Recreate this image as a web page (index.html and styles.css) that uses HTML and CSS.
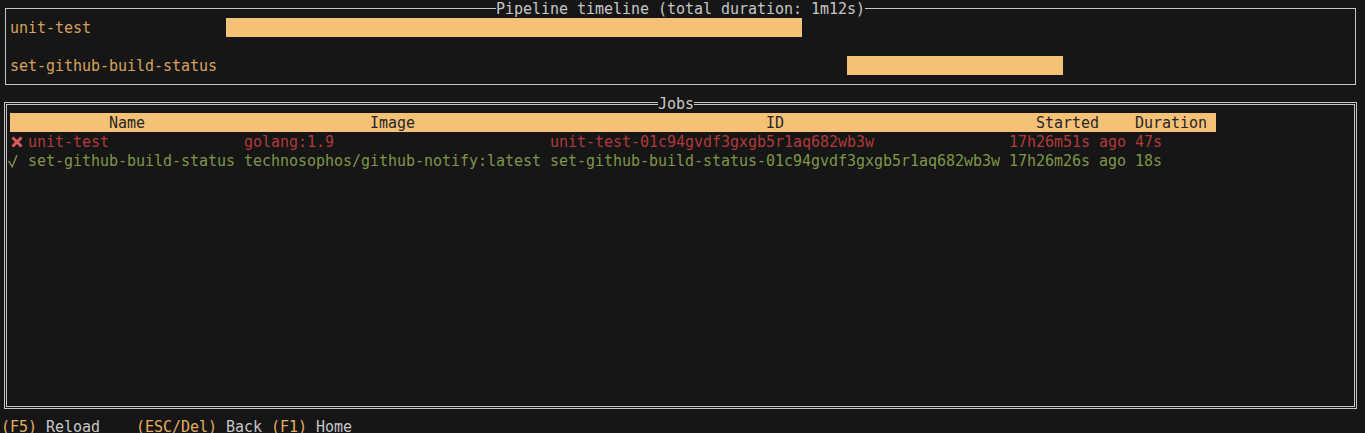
FILE: index.html
```html
<!DOCTYPE html>
<html lang="en">
<head>
<meta charset="utf-8">
<title>Pipeline</title>
<link rel="stylesheet" href="styles.css">
</head>
<body>
<div class="screen">
  <section class="box timeline">
    <h1 class="box-title timeline-title">Pipeline timeline (total duration: 1m12s)</h1>
    <div class="tl-row">
      <span class="tl-label">unit-test</span>
      <span class="tl-track"><span class="tl-bar" style="margin-left:0px;width:576px"></span></span>
    </div>
    <div class="tl-row">
      <span class="tl-label">set-github-build-status</span>
      <span class="tl-track"><span class="tl-bar" style="margin-left:621px;width:216px"></span></span>
    </div>
  </section>

  <section class="box jobs">
    <h2 class="box-title jobs-title">Jobs</h2>
    <div class="row head">
      <span class="c-name">Name</span>
      <span class="c-image">Image</span>
      <span class="c-id">ID</span>
      <span class="c-started">Started</span>
      <span class="c-duration">Duration</span>
    </div>
    <div class="row failed">
      <span class="c-name"><svg class="icon" width="18" height="19" viewBox="0 0 18 19"><path d="M2.5 5.5 L11.5 14.5 M11.5 5.5 L2.5 14.5" stroke="#dc5a5c" stroke-width="3" fill="none"/></svg>unit-test</span>
      <span class="c-image">golang:1.9</span>
      <span class="c-id">unit-test-01c94gvdf3gxgb5r1aq682wb3w</span>
      <span class="c-started">17h26m51s ago</span>
      <span class="c-duration">47s</span>
    </div>
    <div class="row ok">
      <span class="c-name"><svg class="icon" width="18" height="19" viewBox="0 0 18 19"><path d="M-1.4 9.8 L2.2 15.8 L6.9 4.2" stroke="#7e9648" stroke-width="1.4" fill="none"/></svg>set-github-build-status</span>
      <span class="c-image">technosophos/github-notify:latest</span>
      <span class="c-id">set-github-build-status-01c94gvdf3gxgb5r1aq682wb3w</span>
      <span class="c-started">17h26m26s ago</span>
      <span class="c-duration">18s</span>
    </div>
  </section>

  <footer class="keys"><span class="key">(F5)</span> Reload    <span class="key">(ESC/Del)</span> Back <span class="key">(F1)</span> Home</footer>
</div>
</body>
</html>
```
FILE: styles.css
```css
html, body {
  margin: 0;
  padding: 0;
  background: #161616;
}
body {
  width: 1365px;
  height: 433px;
  overflow: hidden;
  font-family: "DejaVu Sans Mono", "Liberation Mono", monospace;
  font-size: 15px;
  line-height: 21px;
  letter-spacing: -0.03px;
  color: #c6c6c6;
}
.screen {
  display: flex;
  flex-direction: column;
  align-items: flex-start;
}
.box {
  position: relative;
  box-sizing: border-box;
}
.box-title {
  position: absolute;
  margin: 0;
  font-size: 15px;
  font-weight: normal;
  line-height: 21px;
  height: 19px;
  background: #161616;
  color: #c6c6c6;
  white-space: pre;
}

/* timeline */
.timeline {
  margin: 8px 0 0 5px;
  width: 1351px;
  height: 77px;
  border: 1px solid #c6c6c6;
  padding: 9px 4px 9px 4px;
  display: flex;
  flex-direction: column;
  gap: 19px;
}
.timeline-title {
  left: 490px;
  top: -10px;
  width: 369px;
}
.tl-row {
  display: flex;
  height: 19px;
}
.tl-label {
  width: 216px;
  flex: none;
  color: #d6a25e;
  white-space: pre;
}
.tl-track {
  display: flex;
  flex: 1;
}
.tl-bar {
  display: block;
  height: 19px;
  background: #f5c177;
}

/* jobs */
.jobs {
  margin: 17px 0 0 4px;
  width: 1353px;
  height: 307px;
  border: 3px double #c6c6c6;
  padding: 8px 0 0 3px;
}
.jobs-title {
  left: 651px;
  top: -11px;
  width: 36px;
}
.row {
  display: flex;
  height: 19px;
  width: 1206px;
  white-space: pre;
}
.row > span {
  flex: none;
  height: 19px;
}
.c-name { width: 234px; }
.c-image { width: 297px; margin-right: 9px; }
.c-id { width: 450px; margin-right: 9px; }
.c-started { width: 117px; margin-right: 9px; }
.c-duration { width: 72px; margin-right: 9px; }

.head {
  background: #f5c177;
  color: #262626;
}
.head > span {
  text-align: center;
}
.failed { color: #b2393b; }
.ok { color: #7e9648; }
.icon {
  display: inline-block;
  vertical-align: top;
  overflow: visible;
}

/* footer */
.keys {
  margin: 8px 0 0 1px;
  height: 19px;
  white-space: pre;
  color: #c6c6c6;
}
.key { color: #e8ad5e; }
```
